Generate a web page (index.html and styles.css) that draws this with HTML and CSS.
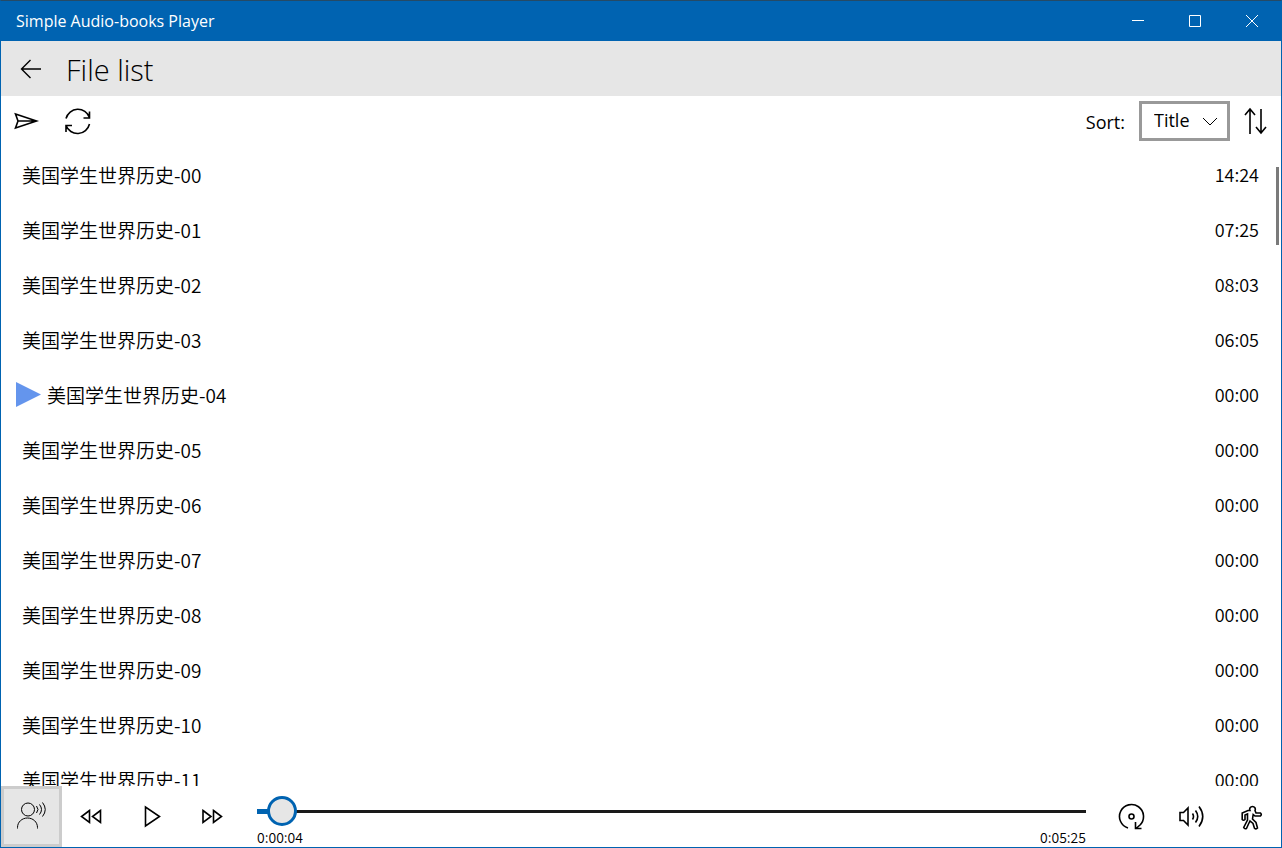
FILE: index.html
```
<!DOCTYPE html>
<html lang="en">
<head>
    <meta charset="UTF-8">
    <meta name="viewport" content="width=device-width, initial-scale=1.0">
    <title>Simple Audio-books Player</title>
    <link rel="stylesheet" href="styles.css">
</head>
<body>

<div class="titlebar">
    <span class="app-name">Simple Audio-books Player</span>
    <div class="window-buttons">
        <button aria-label="Minimize"><svg width="12" height="12" viewBox="0 0 12 12"><path d="M0 5.500h12"/></svg></button>
        <button aria-label="Maximize"><svg width="12" height="12" viewBox="0 0 12 12"><path d="M.5.5h11v11h-11z"/></svg></button>
        <button aria-label="Close"><svg width="12" height="12" viewBox="0 0 12 12"><path d="M0 0l12 12M12 0L0 12"/></svg></button>
    </div>
</div>

<header>
    <button aria-label="Back"><svg width="22" height="20" viewBox="0 0 22 20"><path stroke-width="1.4" d="M21 10H1.500M10.500 1l-9 9 9 9"/></svg></button>
    <h1>File list</h1>
</header>

<div class="toolbar">
    <button aria-label="Locate current"><svg width="28" height="28" viewBox="0 0 28 28"><path class="bold" d="M2.500 7L23.500 14 2.500 21 5 14zM5 14h17.500"/></svg></button>
    <button aria-label="Refresh"><svg width="28" height="28" viewBox="0 0 28 28"><path class="bold" d="M2 11.500A12.300 12.300 0 0 1 25.500 10.500M25.500 4.500v6.500h-6M25.500 17A12.300 12.300 0 0 1 2 18.500M2 25v-6.500h6"/></svg></button>
    <div class="sort">
        <label for="sort">Sort:</label>
        <div class="select-box">
            <select id="sort">
                <option>Title</option>
                <option>Length</option>
            </select>
            <svg width="16" height="10" viewBox="0 0 16 10"><path d="M1 1l7 7 7-7"/></svg>
        </div>
        <button aria-label="Sort direction"><svg width="24" height="28" viewBox="0 0 24 28"><path class="bold" d="M6 27V2M1 8l5-6 5 6M17 2v24M12 20l5 6 5-6"/></svg></button>
    </div>
</div>

<main>
    <ul class="file-list">
        <li><span>美国学生世界历史-00</span><time>14:24</time></li>
        <li><span>美国学生世界历史-01</span><time>07:25</time></li>
        <li><span>美国学生世界历史-02</span><time>08:03</time></li>
        <li><span>美国学生世界历史-03</span><time>06:05</time></li>
        <li class="current">
            <svg width="25" height="25" viewBox="0 0 25 25"><path d="M0 0l25 12.500L0 25z"/></svg>
            <span>美国学生世界历史-04</span><time>00:00</time>
        </li>
        <li><span>美国学生世界历史-05</span><time>00:00</time></li>
        <li><span>美国学生世界历史-06</span><time>00:00</time></li>
        <li><span>美国学生世界历史-07</span><time>00:00</time></li>
        <li><span>美国学生世界历史-08</span><time>00:00</time></li>
        <li><span>美国学生世界历史-09</span><time>00:00</time></li>
        <li><span>美国学生世界历史-10</span><time>00:00</time></li>
        <li><span>美国学生世界历史-11</span><time>00:00</time></li>
    </ul>
    <div class="scroll-thumb"></div>
</main>

<footer>
    <button class="active" aria-label="Read aloud"><svg width="32" height="32" viewBox="0 0 32 32"><circle cx="12" cy="8.500" r="6.500"/><path d="M1.500 27.500v-1C1.500 21 6 17 11.500 17S21.500 21 21.500 26.500v1M20.500 5q3 3.500 0 7M23.500 3.500q4 5 0 10M26.500 1.500q5.500 7 0 14"/></svg></button>
    <button aria-label="Rewind"><svg width="24" height="24" viewBox="0 0 24 24"><path class="bold" d="M9.500 5.500l-8 6 8 6zM20.500 5.500l-8 6 8 6z"/></svg></button>
    <button aria-label="Play"><svg width="24" height="24" viewBox="0 0 24 24"><path class="bold" d="M5.500 2v19L19.500 11.500z"/></svg></button>
    <button aria-label="Fast forward"><svg width="24" height="24" viewBox="0 0 24 24"><path class="bold" d="M3 5.500l8 6-8 6zM13.500 5.500l8 6-8 6z"/></svg></button>
    <div class="progress">
        <input type="range" min="0" max="325" value="4" aria-label="Position">
        <div class="times"><span>0:00:04</span><span>0:05:25</span></div>
    </div>
    <button aria-label="Repeat"><svg width="28" height="28" viewBox="0 0 28 28"><path class="bold" d="M11 25A12 12 0 1 1 23 22L19 25.500M18.500 19v6.500h6"/><circle class="bold" cx="14.500" cy="13.500" r="2.500"/></svg></button>
    <button aria-label="Volume"><svg width="28" height="28" viewBox="0 0 28 28"><path class="bold" d="M3 9.500h3.500L11 5v17l-4.500-4.500H3zM15.500 10.500q2 3 0 6M18.500 7.500q4.500 6 0 12M22 3.500q7.500 10 0 20"/></svg></button>
    <button aria-label="Speed"><svg width="24" height="28" viewBox="0 0 24 28"><path class="bold" d="M11 7.500a2.800 2.800 0 1 1 5 0L17 10h4.500q1.500 1.500 0 3H16l-1.800-1.500L13.500 16l3.500 3.500 1.500 5.500q-1.500 1.700-3 .2L14 20.500l-3-2.500-1.500 3-2 4.500q-2 .8-2.800-1L8.500 17V11L6 12v4.500q-1.500 1.500-2.800 0V10L9 7.500z"/></svg></button>
</footer>

</body>
</html>
```
FILE: styles.css
```
* { box-sizing: border-box; }
body { display: flex; flex-direction: column; height: 100vh; margin: 0; border: 1px solid #0063b1; border-top-color: #254a66; background-color: white; color: black; font-family: "Noto Sans CJK SC", "Noto Sans", sans-serif; }
button { display: flex; align-items: center; justify-content: center; flex-shrink: 0; padding: 0; border: none; background: none; color: inherit; cursor: pointer; }
svg { fill: none; stroke: currentColor; stroke-width: 1; flex-shrink: 0; }
.bold { stroke-width: 1.6; }

.titlebar { display: flex; flex-shrink: 0; justify-content: space-between; height: 40px; padding: 0 1px 0 15px; background-color: #0063b1; color: white; }
.app-name { font-family: "Open Sans", sans-serif; font-size: 16px; line-height: 40px; }
.window-buttons { display: flex; }
.window-buttons button { width: 57px; }

header { display: flex; flex-shrink: 0; align-items: center; height: 55px; background-color: #e6e6e6; }
header button { width: 60px; height: 55px; }
h1 { margin: 0; padding: 2px 0 0 5px; font-family: "Open Sans", sans-serif; font-size: 29px; font-weight: 300; line-height: 53px; }

.toolbar { display: flex; flex-shrink: 0; height: 51px; }
.toolbar button { width: 51px; height: 50px; }
.sort { display: flex; align-items: center; height: 49px; margin-left: auto; font-family: "Open Sans", sans-serif; font-size: 18px; }
.sort label { margin-right: 14px; padding-top: 2px; }
.select-box { position: relative; }
.select-box select { display: block; width: 91px; height: 40px; padding: 0 12px 2px; border: 3px solid #999; border-radius: 0; background-color: white; color: black; font: inherit; appearance: none; }
.select-box svg { position: absolute; right: 12px; top: 16px; pointer-events: none; }

main { position: relative; flex: 1; min-height: 0; overflow: hidden; }
.file-list { margin: 0; padding: 0; list-style: none; }
.file-list li { display: flex; align-items: center; height: 55px; padding: 0 22px 0 21px; font-size: 19px; font-weight: 350; line-height: 27px; }
.file-list .current { gap: 6px; padding-left: 15px; }
.file-list svg { fill: #6495ed; stroke: none; }
.file-list time { margin-left: auto; font-size: 18px; }
.scroll-thumb { position: absolute; top: 20px; right: 2px; width: 3px; height: 78px; background-color: #7a7a7a; }

footer { display: flex; flex-shrink: 0; height: 61px; }
footer button { width: 60px; height: 61px; }
footer .active { width: 61px; border: 3px solid #ccc; background-color: #e6e6e6; }
.progress { flex: 1; margin: 0 15px; }
.progress input { display: block; width: 100%; height: 30px; margin: 10px 0 0; background: none; appearance: none; }
.progress input::-webkit-slider-runnable-track { height: 5px; background: linear-gradient(#0063b1, #0063b1) left / 14px 5px no-repeat, linear-gradient(#1a1a1a, #1a1a1a) center / 100% 3px no-repeat; }
.progress input::-webkit-slider-thumb { width: 30px; height: 30px; margin-top: -13px; border: 3px solid #0063b1; border-radius: 50%; background-color: #e6e6e6; appearance: none; }
.times { display: flex; justify-content: space-between; font-size: 14px; font-weight: 350; line-height: 22px; }
```
